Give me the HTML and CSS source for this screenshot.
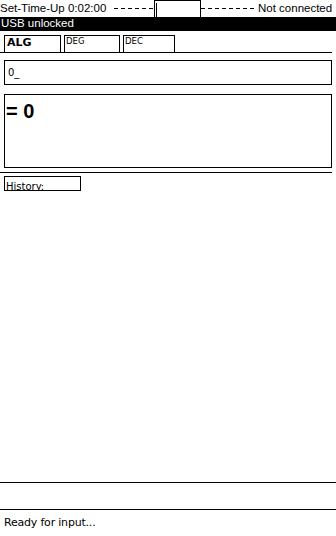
FILE: index.html
```html
<!DOCTYPE html>
<html>
<head>
<meta charset="utf-8">
<link rel="stylesheet" href="styles.css">
</head>
<body>
<div class="screen">
  <div class="topbar">
    <span class="tt left">Set-Time-Up 0:02:00</span>
    <span class="dash d1"></span>
    <span class="slot"><span class="cursor"></span></span>
    <span class="dash d2"></span>
    <span class="tt right">Not connected</span>
  </div>
  <div class="usb">USB unlocked</div>
  <div class="tabs">
    <div class="tab active">ALG</div>
    <div class="tab">DEG</div>
    <div class="tab dec">DEC</div>
  </div>
  <div class="input">0_</div>
  <div class="result">= 0</div>
  <div class="sep"></div>
  <div class="history">History:</div>
  <div class="spacer"></div>
  <div class="line full"></div>
  <div class="gap"></div>
  <div class="line full"></div>
  <div class="status">Ready for input...</div>
</div>
</body>
</html>
```
FILE: styles.css
```css
html, body { margin: 0; padding: 0; background: #fff; }
body { font-family: "DejaVu Sans", sans-serif; color: #000; }
.screen { width: 336px; height: 536px; display: flex; flex-direction: column; }
.topbar { height: 17px; display: flex; align-items: flex-start; font-size: 11px; line-height: 16px; }
.tt { white-space: nowrap; font-family: "Liberation Sans", sans-serif; font-size: 11.5px; }
.tt.left { width: 114px; }
.tt.right { width: 78px; }
.dash { height: 1px; margin-top: 8px; background: repeating-linear-gradient(to right, #000 0 4px, transparent 4px 7px); }
.d1 { width: 40px; }
.d2 { flex: 1; margin-right: 2px; }
.slot { width: 45px; height: 16px; border: 1px solid #000; border-bottom: none; box-sizing: content-box; position: relative; margin-left: 0; }
.cursor { position: absolute; left: 1px; top: 2px; width: 1px; height: 14px; background: #000; }
.usb { height: 14px; background: #000; color: #fff; font-size: 11px; line-height: 13px; padding-left: 1px; font-family: "Liberation Sans", sans-serif; font-size: 11.5px; }
.tabs { display: flex; gap: 3px; padding: 4px 4px 0 4px; margin-right: 4px; height: 17px; border-bottom: 1px solid #000; }
.tab { width: 56px; border: 1px solid #000; border-bottom: none; font-size: 8.5px; line-height: 11px; padding-left: 1px; box-sizing: border-box; }
.tab.active { width: 57px; font-size: 11px; font-weight: bold; padding-left: 2px; line-height: 14px; }
.tab.dec { width: 52px; }
.input { margin: 7px 4px 0 4px; height: 23px; border: 1px solid #000; font-size: 10px; line-height: 23px; padding-left: 3px; }
.result { margin: 9px 4px 0 4px; height: 72px; border: 1px solid #000; font-family: "Liberation Sans", sans-serif; font-size: 20px; font-weight: bold; line-height: 32px; padding-left: 1px; }
.sep { margin: 4px 4px 0 0; border-top: 1px solid #000; }
.history { margin: 3px 0 0 4px; width: 74px; height: 13px; border: 1px solid #000; font-size: 10px; line-height: 19px; padding-left: 1px; overflow: hidden; }
.spacer { flex: 1; }
.line { border-top: 1px solid #000; }
.gap { height: 26px; }
.status { height: 26px; font-size: 11px; line-height: 26px; padding-left: 4px; letter-spacing: -0.2px; }
```
